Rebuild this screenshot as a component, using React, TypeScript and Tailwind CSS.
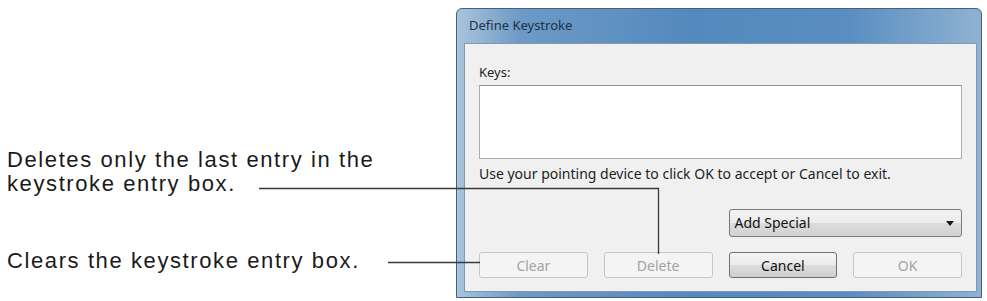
const captionFont = { fontFamily: '"Liberation Sans", Arial, sans-serif' };
const uiFont = { fontFamily: '"Noto Sans", "Open Sans", sans-serif' };

function DisabledButton({ label }: { label: string }) {
  return (
    <button
      disabled
      className="h-[26px] rounded-[3px] border border-[#c4c7ca] bg-[#f4f4f4] text-[14px] text-[#a3a3a3]"
    >
      {label}
    </button>
  );
}

function DefineKeystrokeDialog() {
  return (
    <div
      className="mt-[8px] flex h-[290px] w-[526px] flex-col rounded-t-[6px] border border-[#4a5f77] bg-[linear-gradient(90deg,#a9c4dc_0%,#6d9ac6_12%,#5489bd_45%,#5a8ec0_75%,#8fb2d2_100%)]"
      style={uiFont}
    >
      <div className="flex h-[34px] items-center pl-[12px] text-[13px] text-[#1d3147]">
        Define Keystroke
      </div>
      <div className="mb-[5px] ml-[7px] mr-[4px] flex flex-1 flex-col border border-[#8298ae] bg-[#f0f0f0] px-[14px]">
        <div className="pt-[19px] text-[13px] leading-[18px] text-[#1e1e1e]">Keys:</div>
        <div className="mt-[4px] h-[74px] border border-[#abadb3] border-t-[#8e9299] bg-white" />
        <div className="mt-[6px] text-[14px] leading-[18px] text-[#1e1e1e]">
          Use your pointing device to click OK to accept or Cancel to exit.
        </div>
        <div className="mt-[26px] grid grid-cols-4 gap-x-[16px]">
          <div className="col-span-2 col-start-3 flex h-[28px] items-center justify-between rounded-[3px] border border-[#7a7a7a] bg-[linear-gradient(180deg,#f3f3f3_0%,#ebebeb_50%,#dcdcdc_51%,#d2d2d2_100%)] pl-[5px] pr-[7px] text-[14px] leading-[18px] text-[#111]">
            <span>Add Special</span>
            <svg width="8" height="5" viewBox="0 0 8 5">
              <path d="M0 0 H8 L4 5 Z" fill="#1a1a1a" />
            </svg>
          </div>
        </div>
        <div className="mt-[15px] grid grid-cols-4 gap-x-[16px]">
          <DisabledButton label="Clear" />
          <DisabledButton label="Delete" />
          <button className="h-[26px] rounded-[3px] border border-[#707070] bg-[linear-gradient(180deg,#f4f4f4_0%,#ebebeb_50%,#dddddd_51%,#cfcfcf_100%)] text-[14px] text-[#111]">
            Cancel
          </button>
          <DisabledButton label="OK" />
        </div>
      </div>
    </div>
  );
}

export default function App() {
  return (
    <div className="relative flex h-[301px] w-[987px] overflow-hidden bg-white">
      <div
        className="flex w-[456px] flex-col pl-[7px] text-[22px] leading-[24px] tracking-[1.6px] text-[#1a1a1a]"
        style={captionFont}
      >
        <p className="pt-[148px]">
          Deletes only the last entry in the
          <br />
          keystroke entry box.
        </p>
        <p className="pt-[53px]">Clears the keystroke entry box.</p>
      </div>
      <DefineKeystrokeDialog />
      {/* callout leader lines drawn over the dialog */}
      <svg className="pointer-events-none absolute left-0 top-0" width="987" height="301">
        <path d="M259 188.5 H658.5 V254" fill="none" stroke="#3a3a3a" strokeWidth="1.3" />
        <path d="M388 262.5 H480" fill="none" stroke="#3a3a3a" strokeWidth="1.3" />
      </svg>
    </div>
  );
}
